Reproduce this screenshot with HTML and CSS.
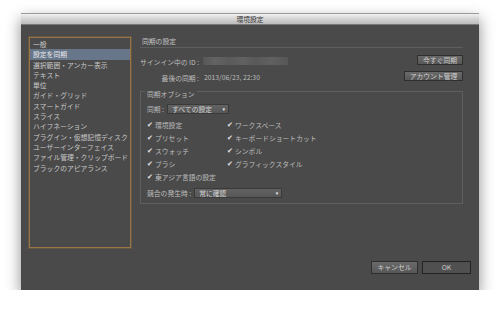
FILE: index.html
```html
<!DOCTYPE html>
<html lang="ja">
<head>
    <meta charset="UTF-8">
    <title>環境設定</title>
    <link rel="stylesheet" href="styles.css">
</head>
<body>
    <div class="dialog">
        <div class="titlebar">環境設定</div>
        <div class="window">
            <div class="content">
                <!-- カテゴリ一覧 -->
                <ul class="sidebar">
                    <li>一般</li>
                    <li class="active">設定を同期</li>
                    <li>選択範囲・アンカー表示</li>
                    <li>テキスト</li>
                    <li>単位</li>
                    <li>ガイド・グリッド</li>
                    <li>スマートガイド</li>
                    <li>スライス</li>
                    <li>ハイフネーション</li>
                    <li>プラグイン・仮想記憶ディスク</li>
                    <li>ユーザーインターフェイス</li>
                    <li>ファイル管理・クリップボード</li>
                    <li>ブラックのアピアランス</li>
                </ul>

                <div class="main">
                    <div class="section-head">同期の設定</div>

                    <div class="account">
                        <div class="account-row">
                            <span class="acc-label">サインイン中の ID :</span>
                            <span class="blur"></span>
                            <button class="btn btn-sync">今すぐ同期</button>
                        </div>
                        <div class="account-row second">
                            <span class="acc-label">最後の同期 :</span>
                            <span class="acc-value">2013/06/23, 22:30</span>
                            <button class="btn btn-account">アカウント管理</button>
                        </div>
                    </div>

                    <!-- 同期オプション -->
                    <div class="group">
                        <div class="group-title">同期オプション</div>
                        <div class="field-row sync-row">
                            <span class="field-label">同期 :</span>
                            <span class="select select-sync">すべての設定<i class="arrow">▾</i></span>
                        </div>
                        <div class="checks">
                            <label class="check"><span class="mark">✔</span>環境設定</label>
                            <label class="check"><span class="mark">✔</span>ワークスペース</label>
                            <label class="check"><span class="mark">✔</span>プリセット</label>
                            <label class="check"><span class="mark">✔</span>キーボードショートカット</label>
                            <label class="check"><span class="mark">✔</span>スウォッチ</label>
                            <label class="check"><span class="mark">✔</span>シンボル</label>
                            <label class="check"><span class="mark">✔</span>ブラシ</label>
                            <label class="check"><span class="mark">✔</span>グラフィックスタイル</label>
                            <label class="check"><span class="mark">✔</span>東アジア言語の設定</label>
                        </div>
                        <div class="field-row conflict-row">
                            <span class="field-label">競合の発生時 :</span>
                            <span class="select select-conflict">常に確認<i class="arrow">▾</i></span>
                        </div>
                    </div>
                </div>
            </div>

            <div class="footer">
                <button class="btn btn-cancel">キャンセル</button>
                <button class="btn btn-ok">OK</button>
            </div>
        </div>
    </div>
</body>
</html>
```

FILE: styles.css
```css
* {
    margin: 0;
    padding: 0;
    box-sizing: border-box;
}

body {
    background: #fff;
    font-family: "Noto Sans CJK JP", "Noto Sans", sans-serif;
    font-size: 6.8px;
    color: #bdbdbd;
}

.dialog {
    width: 458px;
    margin: 13px 0 0 21px;
    box-shadow: 0 6px 14px rgba(0, 0, 0, 0.45);
}

.titlebar {
    height: 12px;
    line-height: 11px;
    text-align: center;
    color: #333;
    background: linear-gradient(#f2f2f2, #d8d8d8 40%, #bdbdbd);
    border-top: 1px solid #9a9a9a;
    border-bottom: 1px solid #7a7a7a;
}

.window {
    height: 265px;
    background: #4a4a4a;
    padding: 12px 8px 0 8px;
}

.content {
    display: flex;
    gap: 9px;
}

/* カテゴリ一覧 */
.sidebar {
    list-style: none;
    width: 102px;
    height: 211px;
    padding-top: 1px;
    border: 1px solid #9a7646;
    box-shadow: 0 0 0 1px rgba(150, 110, 60, 0.35);
}

.sidebar li {
    height: 10.3px;
    line-height: 10.3px;
    padding-left: 3px;
    color: #c8c8c8;
    white-space: nowrap;
}

.sidebar li.active {
    background: #687689;
    color: #e8eaee;
}

.main {
    width: 323px;
}

.section-head {
    height: 11px;
    line-height: 8px;
    padding-left: 2px;
    color: #c4c4c4;
    border-bottom: 1px solid #5e5e5e;
}

.account {
    margin-top: 7px;
}

.account-row {
    display: flex;
    align-items: center;
    height: 10px;
}

.account-row.second {
    margin-top: 6px;
}

.acc-label {
    width: 59px;
    text-align: right;
    padding-top: 3px;
    white-space: nowrap;
}

.acc-value {
    margin-left: 5px;
    padding-top: 2px;
}

.blur {
    width: 85px;
    height: 8px;
    margin-left: 4px;
    margin-top: 2px;
    background: linear-gradient(90deg, #575757, #636363 15%, #5a5a5a 30%, #616161 48%, #585858 62%, #606060 80%, #575757);
}

.btn {
    margin-left: auto;
    height: 10px;
    line-height: 8px;
    font-family: inherit;
    font-size: 6.8px;
    color: #cdcdcd;
    border: 1px solid #2f2f2f;
    background: linear-gradient(#6a6a6a, #575757);
}

.btn-sync {
    width: 46px;
}

.btn-account {
    width: 59px;
}

.group {
    margin-top: 10px;
    height: 113px;
    border: 1px solid #5f5f5f;
    padding: 0 5px 0 6px;
}

.group-title {
    display: table;
    margin-top: -2px;
    margin-left: -2px;
    padding: 0 2px;
    line-height: 9px;
    background: #4a4a4a;
}

.field-row {
    display: flex;
    align-items: center;
    height: 10px;
}

.sync-row {
    margin-top: 5px;
}

.conflict-row {
    margin-top: 5px;
}

.field-label {
    margin-right: 3px;
}

.select {
    display: flex;
    justify-content: space-between;
    align-items: center;
    height: 10px;
    padding: 0 3px 0 4px;
    color: #d6d6d6;
    border: 1px solid #3a3a3a;
    background: linear-gradient(#626262, #575757);
}

.select-sync {
    width: 62px;
}

.select-conflict {
    width: 88px;
}

.arrow {
    font-style: normal;
    font-family: "DejaVu Sans", sans-serif;
    font-size: 5px;
    color: #f0f0f0;
}

.checks {
    display: grid;
    grid-template-columns: 80px 1fr;
    grid-auto-rows: 13px;
    margin-top: 4px;
}

.check {
    display: flex;
    align-items: center;
    white-space: nowrap;
}

.mark {
    width: 7px;
    margin-right: 1px;
    font-family: "DejaVu Sans", sans-serif;
    font-size: 7px;
    color: #e6e6e6;
}

.footer {
    display: flex;
    justify-content: flex-end;
    gap: 4px;
    margin-top: 13px;
}

.footer .btn {
    margin-left: 0;
    height: 13px;
    line-height: 11px;
}

.btn-cancel {
    width: 47px;
    height: 12px;
}

.btn-ok {
    width: 49px;
    border-color: #222;
    background: #505050;
}
```
